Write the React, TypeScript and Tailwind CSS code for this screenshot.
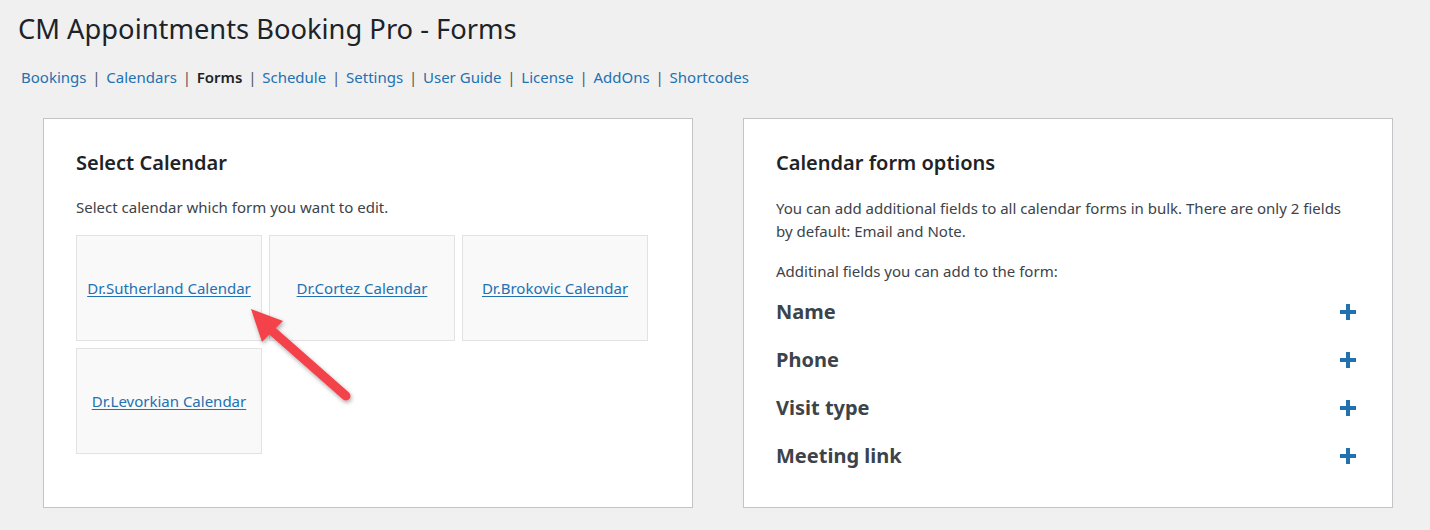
import React from 'react';

const navItems = ['Bookings', 'Calendars', 'Forms', 'Schedule', 'Settings', 'User Guide', 'License', 'AddOns', 'Shortcodes'];
const calendars = ['Dr.Sutherland Calendar', 'Dr.Cortez Calendar', 'Dr.Brokovic Calendar', 'Dr.Levorkian Calendar'];
const fields = ['Name', 'Phone', 'Visit type', 'Meeting link'];

const Arrow = () => (
  <svg className="absolute left-[240px] top-[300px] pointer-events-none" width="130" height="120" viewBox="0 0 130 120">
    <defs>
      <filter id="sh" x="-20%" y="-20%" width="140%" height="140%">
        <feDropShadow dx="1" dy="2" stdDeviation="2" floodColor="#000" floodOpacity="0.35" />
      </filter>
    </defs>
    <g filter="url(#sh)">
      <line x1="106" y1="96" x2="30" y2="29" stroke="#f3424a" strokeWidth="9" strokeLinecap="round" />
      <polygon points="11,9 43,21 22,42" fill="#f3424a" />
    </g>
  </svg>
);

const PlusIcon = () => (
  <svg width="16" height="16" viewBox="0 0 16 16" className="text-[#2271b1]">
    <rect x="6" y="0" width="4" height="16" fill="currentColor" />
    <rect x="0" y="6" width="16" height="4" fill="currentColor" />
  </svg>
);

export default function App() {
  return (
    <div className="relative min-h-[530px] bg-[#f0f0f1] text-[#1d2327]" style={{ fontFamily: '"Noto Sans", "Open Sans", sans-serif' }}>
      <div className="px-[18px] pt-[11px]">
        <h1 className="text-[27.3px] leading-[36px] font-normal">CM Appointments Booking Pro - Forms</h1>
        <nav className="mt-[20px] ml-[3px] flex items-center text-[15px] leading-[20px]">
          {navItems.map((item, i) => (
            <React.Fragment key={item}>
              {i > 0 && <span className="mx-[5.8px] text-[#50575e]">|</span>}
              {item === 'Forms' ? (
                <span className="font-semibold text-[#1d2327]">{item}</span>
              ) : (
                <a className="text-[#2271b1]">{item}</a>
              )}
            </React.Fragment>
          ))}
        </nav>
      </div>

      <div className="mt-[31px] ml-[43px] flex gap-[50px]">
        <div className="w-[650px] h-[390px] bg-white border border-[#c3c4c7] px-[32px] pt-[31px]">
          <h2 className="text-[20px] leading-[26px] font-semibold">Select Calendar</h2>
          <p className="mt-[21px] text-[15px] leading-[20px] text-[#3c434a]">Select calendar which form you want to edit.</p>
          <div className="mt-[18px] grid grid-cols-[186px_186px_186px] gap-[7px]">
            {calendars.map((c) => (
              <div key={c} className="h-[106px] bg-[#f9f9f9] border border-[#e2e2e2] flex items-center justify-center">
                <a className="text-[15px] text-[#2271b1] underline underline-offset-2">{c}</a>
              </div>
            ))}
          </div>
        </div>

        <div className="w-[650px] h-[390px] bg-white border border-[#c3c4c7] px-[32px] pt-[31px]">
          <h2 className="text-[20px] leading-[26px] font-semibold">Calendar form options</h2>
          <p className="mt-[21px] text-[15px] leading-[23px] text-[#3c434a]">
            You can add additional fields to all calendar forms in bulk. There are only 2 fields by default: Email and Note.
          </p>
          <p className="mt-[18px] text-[15px] leading-[20px] text-[#3c434a]">Additinal fields you can add to the form:</p>
          <div className="mt-[18px] flex flex-col gap-[22px] pr-[4px]">
            {fields.map((f) => (
              <div key={f} className="flex items-center justify-between h-[26px]">
                <span className="text-[20px] font-bold text-[#3c434a]">{f}</span>
                <PlusIcon />
              </div>
            ))}
          </div>
        </div>
      </div>

      <Arrow />
    </div>
  );
}
